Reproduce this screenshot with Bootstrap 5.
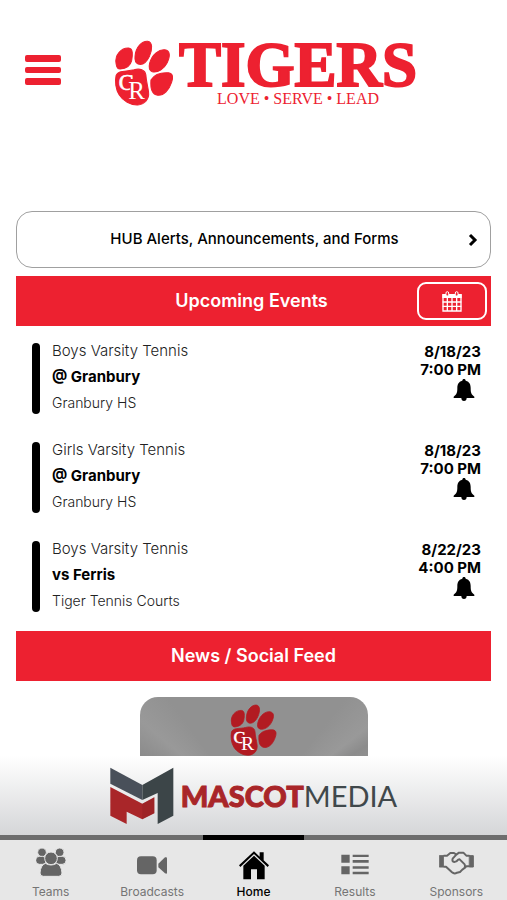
<!DOCTYPE html>
<html lang="en">
<head>
<meta charset="utf-8">
<meta name="viewport" content="width=device-width, initial-scale=1">
<title>Tigers</title>
<link href="https://cdn.jsdelivr.net/npm/bootstrap@5.3.0/dist/css/bootstrap.min.css" rel="stylesheet">
<style>
  :root { --tiger: #ed2130; }
  body { font-family: Inter, "Liberation Sans", sans-serif; color: #000; background: #fff; }
  .text-tiger { color: var(--tiger); }
  .app-header { padding: 40px 24px 104px; }
  .menu-btn { width: 37px; margin-top: 14px; }
  .brand { margin-left: 53px; gap: 5px; font-family: "Liberation Serif", serif; }
  .brand-paw { width: 60px; height: 66px; }
  .brand-name { font-size: 63px; line-height: 51px; font-weight: 700; -webkit-text-stroke: 2px var(--tiger); }
  .brand-motto { font-size: 16px; line-height: 16px; }
  .hub-btn { min-height: 57px; border: 1px solid #a0a0a0; border-radius: 16px; font-size: 15px; font-weight: 500; color: #000; }
  .band { min-height: 50px; background: var(--tiger); color: #fff; }
  .band h2 { font-size: 18px; line-height: 24px; font-weight: 600; }
  .band-side { flex: 1 1 0; }
  .cal-btn { width: 70px; height: 38px; border: 2px solid #fff; border-radius: 9px; }
  .event-list { padding: 17px 10px 19px 16px; gap: 28px; }
  .event { gap: 12px; }
  .event-bar { width: 8px; border-radius: 4px; background: #000; }
  .event-info { font-size: 15px; line-height: 16px; gap: 10px; font-weight: 300; color: #222; padding-bottom: 3px; }
  .event-info .fw-bold { color: #000; }
  .event-info .place { font-size: 14px; }
  .event-when { font-size: 15px; line-height: 18px; font-weight: 700; }
  .bell-btn { margin-right: 6px; }
  .news-card { width: 228px; height: 132px; border-radius: 18px; padding-top: 7px;
    background: conic-gradient(from 0deg at 50% 90%, #919191 0 38deg, #999 52deg, #8c8c8c 58deg, #989898 70deg, #858585 90deg, #8c8c8c 270deg, #979797 290deg, #8b8b8b 298deg, #999 310deg, #919191 324deg); color: #b21b22; }
  .feed { scrollbar-width: none; }
  .sponsor { height: 79px; background: linear-gradient(#fff, #d5d6d8); gap: 7px; font-family: Lato, sans-serif; font-size: 29px; line-height: 36px; color: #40484b; }
  .sponsor b { font-weight: 900; color: #a92629; -webkit-text-stroke: 1px #a92629; }
  .tabs { background: #e7e7e7; height: 65px; }
  .tabs a { flex: 1 1 0; border-top: 5px solid #6d6d6d; color: #757575; font-size: 12px; line-height: 16px; padding-top: 4px; gap: 4px; }
  .tabs a svg { color: #656565; height: 36px; }
  .tabs a.current { color: #000; border-color: #000; font-weight: 500; }
  .tabs a.current svg { color: #000; }
</style>
</head>
<body>
<svg class="d-none" aria-hidden="true">
  <symbol id="paw" viewBox="0 0 175 195">
    <g fill="currentColor" stroke="currentColor" stroke-width="3" stroke-linejoin="round">
      <path d="M5 70C0 42 22 23 42 24C56 25 54 45 51 61C47 78 31 85 17 86C8 86 6 78 5 70Z"/>
      <path d="M61 48C63 20 82 3 98 4C114 6 112 29 104 47C95 66 83 75 70 71C61 67 60 59 61 48Z"/>
      <path d="M104 69C111 42 133 27 149 29C166 32 165 48 156 67C147 85 128 98 112 94C102 90 101 81 104 69Z"/>
      <path d="M108 118C119 100 143 96 160 97C174 99 174 111 169 125C162 147 146 165 128 163C111 161 106 144 108 118Z"/>
      <path d="M5 105C11 88 35 94 58 88C75 83 91 88 93 103C94 122 99 137 101 154C104 176 88 191 69 192C48 193 25 180 14 162C4 146 1 122 5 105Z"/>
    </g>
    <g fill="#fff" font-family="Liberation Serif, serif">
      <text x="13" y="148" font-size="66" stroke="#fff" stroke-width="2">C</text>
      <text x="41" y="174" font-size="74" stroke="currentColor" stroke-width="6" paint-order="stroke">R</text>
    </g>
  </symbol>
  <symbol id="bell" viewBox="0 0 62 66">
    <path fill="currentColor" d="M31 0C34 0 36 2 36 5C48 8 51 17 51 27C51 42 53 46 62 53V57H39C39 63 36 66 31 66S23 63 23 57H0V53C9 46 11 42 11 27C11 17 14 8 26 5C26 2 28 0 31 0Z"/>
  </symbol>
</svg>

<div class="vh-100 d-flex flex-column">
  <main class="feed flex-fill overflow-auto">
    <header class="app-header d-flex align-items-start">
      <button type="button" class="menu-btn btn p-0 border-0 text-tiger d-flex" aria-label="Menu">
        <svg width="37" height="33" viewBox="0 0 37 33" fill="currentColor"><rect x="1" y="1" width="36" height="7" rx="2"/><rect x="1" y="13" width="36" height="6" rx="2"/><rect x="1" y="24" width="36" height="7" rx="2"/></svg>
      </button>
      <div class="brand d-flex text-tiger">
        <svg class="brand-paw" aria-hidden="true"><use href="#paw"/></svg>
        <div class="text-center">
          <h1 class="brand-name mb-0">TIGERS</h1>
          <div class="brand-motto">LOVE • SERVE • LEAD</div>
        </div>
      </div>
    </header>

    <div class="px-3">
      <button type="button" class="hub-btn btn w-100 bg-white d-flex align-items-center px-2 mb-2">
        <span class="flex-fill ps-3">HUB Alerts, Announcements, and Forms</span>
        <svg class="me-1" width="10" height="14" viewBox="0 0 10 14" fill="none" stroke="currentColor" stroke-width="3" aria-hidden="true"><path d="M2 2L7 7L2 12"/></svg>
      </button>

      <section>
        <div class="band d-flex align-items-center">
          <div class="band-side"></div>
          <h2 class="mb-0">Upcoming Events</h2>
          <div class="band-side d-flex justify-content-end pe-1">
            <button type="button" class="cal-btn btn p-0 text-white d-flex align-items-center justify-content-center" aria-label="Calendar">
              <svg width="20" height="21" viewBox="0 0 60 63" fill="none" stroke="currentColor">
                <path stroke-width="4" d="M3 12H57V60H3Z"/><path fill="currentColor" stroke="none" d="M1 9H59V21H1Z"/>
                <path stroke-width="4" d="M16 20V60M30 20V60M44 20V60M2 33H58M2 46H58"/>
                <rect x="12" y="2" width="8" height="13" rx="4" fill="#ed2130" stroke-width="3"/><rect x="40" y="2" width="8" height="13" rx="4" fill="#ed2130" stroke-width="3"/>
              </svg>
            </button>
          </div>
        </div>
        <ul class="event-list list-unstyled mb-0 d-flex flex-column">
          <li class="event d-flex">
            <div class="event-bar"></div>
            <div class="event-info d-flex flex-column flex-fill"><span>Boys Varsity Tennis</span><span class="fw-bold">@ Granbury</span><span class="place">Granbury HS</span></div>
            <div class="event-when d-flex flex-column align-items-end"><span>8/18/23</span><span>7:00 PM</span>
              <button type="button" class="bell-btn btn p-0 border-0 d-flex text-black" aria-label="Notify me"><svg width="22" height="22"><use href="#bell"/></svg></button></div>
          </li>
          <li class="event d-flex">
            <div class="event-bar"></div>
            <div class="event-info d-flex flex-column flex-fill"><span>Girls Varsity Tennis</span><span class="fw-bold">@ Granbury</span><span class="place">Granbury HS</span></div>
            <div class="event-when d-flex flex-column align-items-end"><span>8/18/23</span><span>7:00 PM</span>
              <button type="button" class="bell-btn btn p-0 border-0 d-flex text-black" aria-label="Notify me"><svg width="22" height="22"><use href="#bell"/></svg></button></div>
          </li>
          <li class="event d-flex">
            <div class="event-bar"></div>
            <div class="event-info d-flex flex-column flex-fill"><span>Boys Varsity Tennis</span><span class="fw-bold">vs Ferris</span><span class="place">Tiger Tennis Courts</span></div>
            <div class="event-when d-flex flex-column align-items-end"><span>8/22/23</span><span>4:00 PM</span>
              <button type="button" class="bell-btn btn p-0 border-0 d-flex text-black" aria-label="Notify me"><svg width="22" height="22"><use href="#bell"/></svg></button></div>
          </li>
        </ul>
      </section>

      <section>
        <div class="band d-flex align-items-center justify-content-center"><h2 class="mb-0">News / Social Feed</h2></div>
        <article class="news-card mx-auto mt-3 text-center"><svg width="47" height="52" aria-hidden="true"><use href="#paw"/></svg></article>
      </section>
    </div>
  </main>

  <footer>
    <div class="sponsor d-flex align-items-center justify-content-center">
      <svg width="64" height="58" viewBox="0 0 192 174" aria-hidden="true">
        <path fill="#49505a" d="M1 2L97 54V99L1 50Z"/><path fill="#3c4548" d="M97 54L190 2V146L143 171V78L97 99Z"/>
        <path fill="#a92629" d="M1 60L97 110L133 91V139L97 157L50 134V171L1 146Z"/><path fill="#8f2023" d="M97 110L133 91V139L97 157Z" opacity=".4"/>
      </svg>
      <div><b>MASCOT</b>MEDIA</div>
    </div>
    <nav class="tabs d-flex text-center" aria-label="Main">
      <a href="#teams" class="text-decoration-none d-flex flex-column align-items-center">
        <svg width="30" height="36" viewBox="0 0 90 108" fill="currentColor" stroke="#e7e7e7" stroke-width="3" aria-hidden="true">
          <circle cx="18" cy="25" r="13"/><circle cx="71" cy="25" r="13"/><rect x="-1" y="37" width="32" height="24" rx="11"/><rect x="58" y="37" width="32" height="24" rx="11"/>
          <circle cx="45" cy="43" r="19"/><path d="M28 58Q45 68 62 58C72 62 77 72 78 87Q78 97 68 97H22Q12 97 12 87C13 72 18 62 28 58Z"/></svg>
        <span>Teams</span></a>
      <a href="#broadcasts" class="text-decoration-none d-flex flex-column align-items-center">
        <svg width="30" height="36" viewBox="0 0 90 108" fill="currentColor" aria-hidden="true"><rect x="0" y="37" width="59" height="54" rx="12"/><path d="M64 59L84 40Q90 38 90 43V86Q90 91 84 88L64 70Z"/></svg>
        <span>Broadcasts</span></a>
      <a href="#home" class="current text-decoration-none d-flex flex-column align-items-center" aria-current="page">
        <svg width="30" height="36" viewBox="0 0 90 108" fill="currentColor" aria-hidden="true"><path d="M45 35L77 65V106H54V76H36V106H13V65Z"/><path d="M0 64L45 22L62 38V25H74V49L90 64L86 69L45 30L4 69Z"/></svg>
        <span>Home</span></a>
      <a href="#results" class="text-decoration-none d-flex flex-column align-items-center">
        <svg width="28" height="36" viewBox="0 0 84 108" fill="currentColor" aria-hidden="true"><path d="M1 32H26V56H1ZM1 67H26V91H1ZM35 32H83V39H35ZM35 48H83V56H35ZM35 67H83V74H35ZM35 83H83V91H35Z"/></svg>
        <span>Results</span></a>
      <a href="#sponsors" class="text-decoration-none d-flex flex-column align-items-center">
        <svg width="35" height="36" viewBox="0 0 105 108" fill="none" stroke="currentColor" stroke-width="6" stroke-linejoin="round" stroke-linecap="round" aria-hidden="true">
          <path fill="currentColor" stroke-width="3" d="M2 35H13V69H2ZM92 35H103V69H92Z"/>
          <path d="M15 35H24L34 27H45L52 32L60 26H73L82 35H90M15 68H21L39 85Q46 91 54 86L63 84L70 77L77 72L82 67H90M52 32L41 44Q38 53 46 54Q53 54 57 47L62 46L77 61Q80 68 76 72"/></svg>
        <span>Sponsors</span></a>
    </nav>
  </footer>
</div>
<script src="https://cdn.jsdelivr.net/npm/bootstrap@5.3.0/dist/js/bootstrap.bundle.min.js"></script>
</body>
</html>
